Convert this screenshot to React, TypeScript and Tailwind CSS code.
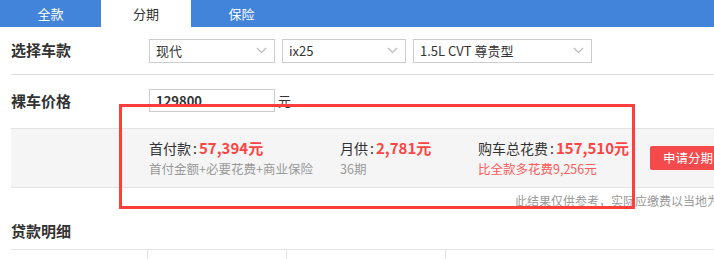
import React from "react";

const Chevron = () => (
  <svg width="11" height="7" viewBox="0 0 11 7" className="shrink-0">
    <path d="M1 1 L5.5 5.5 L10 1" fill="none" stroke="#b8b8b8" strokeWidth="1.1" />
  </svg>
);

const Select = ({ value, w }: { value: string; w: string }) => (
  <div className={`${w} h-[24px] border border-[#cccccc] bg-white flex items-center justify-between pl-[6px] pr-[7px] text-[13px] text-[#333]`}>
    <span>{value}</span>
    <Chevron />
  </div>
);

const Colon = () => <span className="inline-block w-[8px] text-center">:</span>;

export default function App() {
  return (
    <div
      className="relative w-[714px] h-[259px] overflow-hidden bg-white text-[#333]"
      style={{ fontFamily: '"Noto Sans CJK SC", "Noto Sans", sans-serif' }}
    >
      <div className="flex h-[27px] bg-[#4184da] text-[13px]">
        <div className="w-[101px] flex items-center justify-center text-white">全款</div>
        <div className="w-[90px] flex items-center justify-center bg-white text-[#333]">分期</div>
        <div className="w-[101px] flex items-center justify-center text-white">保险</div>
      </div>

      <div className="pl-[11px]">
        <div className="h-[48px] flex items-center border-b border-[#dddddd]">
          <div className="w-[138px] text-[15px] font-bold">选择车款</div>
          <div className="flex gap-[7px]">
            <Select value="现代" w="w-[126px]" />
            <Select value="ix25" w="w-[124px]" />
            <Select value="1.5L CVT 尊贵型" w="w-[179px]" />
          </div>
        </div>

        <div className="h-[53px] flex items-start pt-[14px]">
          <div className="w-[138px] text-[15px] font-bold leading-[23px]">裸车价格</div>
          <div className="w-[126px] h-[23px] border border-[#cccccc] pl-[6px] text-[13px] font-bold leading-[21px]">129800</div>
          <div className="ml-[3px] text-[13px] leading-[23px]">元</div>
        </div>

        <div className="h-[60px] bg-[#f5f5f5] border-y border-[#e3e3e3] flex items-center pl-[138px] overflow-hidden">
          <div className="w-[191px] shrink-0 flex flex-col gap-[2px]">
            <div className="flex items-baseline text-[14px] leading-[20px] whitespace-nowrap">
              首付款<Colon /><span className="text-[15px] font-bold text-[#ff4444]">57,394元</span>
            </div>
            <div className="text-[12.5px] text-[#999] leading-[18px] whitespace-nowrap">首付金额+必要花费+商业保险</div>
          </div>
          <div className="w-[138px] shrink-0 flex flex-col gap-[2px]">
            <div className="flex items-baseline text-[14px] leading-[20px] whitespace-nowrap">
              月供<Colon /><span className="text-[15px] font-bold text-[#ff4444]">2,781元</span>
            </div>
            <div className="text-[12.5px] text-[#999] leading-[18px]">36期</div>
          </div>
          <div className="w-[172px] shrink-0 flex flex-col gap-[2px]">
            <div className="flex items-baseline text-[14px] leading-[20px] whitespace-nowrap">
              购车总花费<Colon /><span className="text-[15px] font-bold text-[#ff4444]">157,510元</span>
            </div>
            <div className="text-[12.5px] text-[#ff5a5a] leading-[18px] whitespace-nowrap">比全款多花费9,256元</div>
          </div>
          <div className="w-[80px] h-[24px] shrink-0 bg-[#f44a4c] rounded-[2px] text-white text-[12.5px] flex items-center pl-[13px] whitespace-nowrap">
            申请分期
          </div>
        </div>

        <div className="h-[26px] pl-[504px] text-[12px] text-[#999] leading-[26px] whitespace-nowrap overflow-hidden">
          此结果仅供参考，实际应缴费以当地为准
        </div>

        <div className="h-[35px] flex items-center text-[15px] font-bold">贷款明细</div>

        <div className="flex h-[20px] border-t border-[#e3e3e3]">
          <div className="w-[137px] border-r border-[#e3e3e3]" />
          <div className="w-[139px] border-r border-[#e3e3e3]" />
          <div className="w-[159px] border-r border-[#e3e3e3]" />
        </div>
      </div>

      <div className="absolute left-[119px] top-[104px] w-[516px] h-[105px] border-[3px] border-[#ff3d3d]" />
    </div>
  );
}
